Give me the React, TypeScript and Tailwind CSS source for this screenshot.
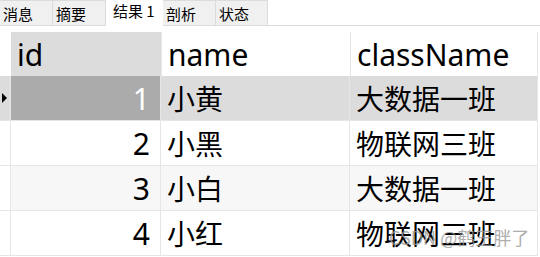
import React from "react";

type Row = { id: string; name: string; cls: string; bg: string; idBg: string; idText: string; ind: string; arrow?: boolean };

const rows: Row[] = [
  { id: "1", name: "小黄", cls: "大数据一班", bg: "bg-[#dcdcdc]", idBg: "bg-[#ababab]", idText: "text-white", ind: "bg-[#dcdcdc]", arrow: true },
  { id: "2", name: "小黑", cls: "物联网三班", bg: "bg-white", idBg: "bg-white", idText: "text-black", ind: "bg-white" },
  { id: "3", name: "小白", cls: "大数据一班", bg: "bg-[#f7f7f7]", idBg: "bg-[#f7f7f7]", idText: "text-black", ind: "bg-white" },
  { id: "4", name: "小红", cls: "物联网三班", bg: "bg-white", idBg: "bg-white", idText: "text-black", ind: "bg-white" },
];

const tabs = [
  { label: "消息", w: "w-[53px]" },
  { label: "摘要", w: "w-[53px]" },
  { label: "结果 1", w: "w-[57px]", active: true },
  { label: "剖析", w: "w-[53px]" },
  { label: "状态", w: "w-[52px]" },
];

const latin = "font-['Noto_Sans','Noto_Sans_CJK_SC',sans-serif]";
const cjk = "font-['Noto_Sans_CJK_SC','Noto_Sans',sans-serif]";

export default function App() {
  return (
    <div className="relative w-[540px] h-[257px] bg-white overflow-hidden text-black">
      {/* Tabs */}
      <div className="flex h-[26px] border-b border-[#dcdcdc] items-end font-['Noto_Sans_CJK_SC','Noto_Sans',sans-serif]">
        {tabs.map((t) =>
          t.active ? (
            <div
              key={t.label}
              className={`${t.w} h-[26px] -mb-px bg-white flex items-start pt-[1px] pl-[7px] text-[15px] leading-[20px]`}
            >
              {t.label}
            </div>
          ) : (
            <div
              key={t.label}
              className={`${t.w} h-[25px] bg-[#f0f0f0] border-t border-r border-[#dcdcdc] flex items-start pt-[3px] pl-[3px] text-[15px] leading-[20px]`}
            >
              {t.label}
            </div>
          )
        )}
      </div>

      <div className="h-[6px]" />

      {/* Header */}
      <div className={`flex h-[44px] text-[30px] ${latin}`}>
        <div className="w-[11px] bg-white" />
        <div className="w-[150px] bg-[#dcdcdc] flex items-center pl-[6px]">id</div>
        <div className="w-[190px] bg-white border-l border-r border-[#e6e6e6] flex items-center pl-[6px]">name</div>
        <div className="w-[187px] bg-white border-r border-[#e6e6e6] flex items-center pl-[6px]">className</div>
      </div>

      {/* Rows */}
      {rows.map((r) => (
        <div key={r.id} className="flex h-[45px]">
          <div className={`w-[11px] ${r.ind} border-r border-b border-[#e6e6e6] flex items-center`}>
            {r.arrow && (
              <svg width="6" height="10" viewBox="0 0 6 10" className="ml-[2px]">
                <polygon points="0,0 5,5 0,10" fill="#000" />
              </svg>
            )}
          </div>
          <div
            className={`w-[150px] ${r.idBg} ${r.idText} border-r border-b border-[#e6e6e6] flex items-center justify-end pr-[10px] text-[30px] ${latin}`}
          >
            {r.id}
          </div>
          <div className={`w-[189px] ${r.bg} border-r border-b border-[#e6e6e6] flex items-center pl-[6px] text-[28px] ${cjk}`}>
            {r.name}
          </div>
          <div className={`w-[188px] ${r.bg} border-r border-b border-[#e6e6e6] flex items-center pl-[6px] text-[28px] ${cjk}`}>
            {r.cls}
          </div>
        </div>
      ))}

      {/* Watermark */}
      <div
        className={`absolute left-[389px] top-[226px] text-[18px] leading-[22px] text-[#9a9a9a] opacity-80 whitespace-nowrap ${cjk}`}
      >
        CSDN @鹤王胖了
      </div>
    </div>
  );
}
